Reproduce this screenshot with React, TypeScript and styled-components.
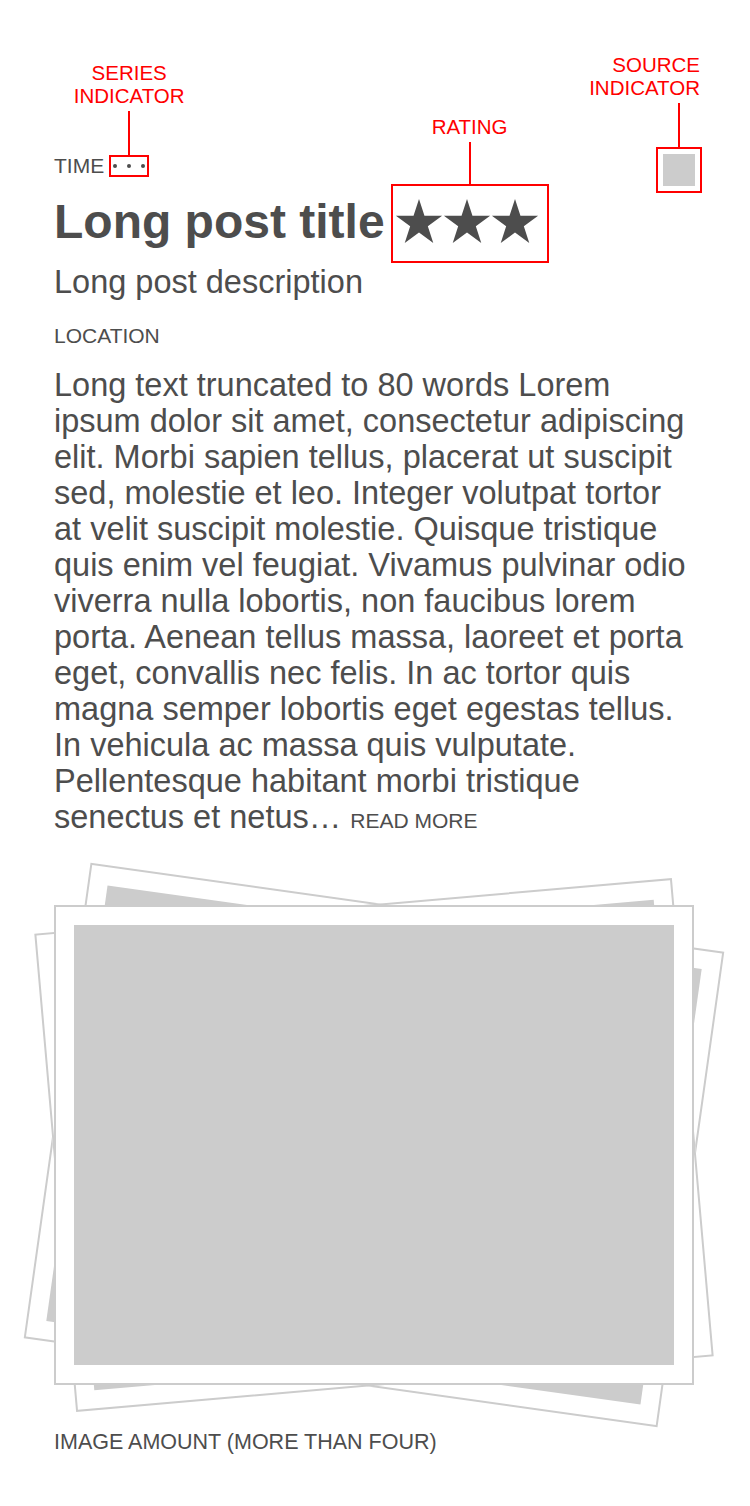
import React from 'react';
import styled, { createGlobalStyle } from 'styled-components';

const ink = '#4d4d4d';
const red = '#ff0000';
const grey = '#cccccc';

const GlobalStyle = createGlobalStyle`
  html, body {
    margin: 0;
    padding: 0;
    background: #ffffff;
  }
  body {
    font-family: "Liberation Sans", Arial, Helvetica, sans-serif;
    color: ${ink};
  }
`;

const Page = styled.div`
  position: relative;
  width: 750px;
  min-height: 1506px;
  box-sizing: border-box;
  padding: 155px 56px 0 54px;
`;

// red annotation: label with a leader line down to the marked part
const Callout = styled.div`
  position: absolute;
  left: 0;
  right: 0;
  bottom: 100%;
  display: flex;
  flex-direction: column;
  align-items: center;
  gap: 4px;
  pointer-events: none;
`;

const CalloutText = styled.div<{ $align?: 'center' | 'end' }>`
  align-self: ${p => (p.$align === 'end' ? 'flex-end' : 'center')};
  text-align: ${p => (p.$align === 'end' ? 'right' : 'center')};
  white-space: nowrap;
  color: ${red};
  font-size: 20.5px;
  line-height: 23px;
`;

const Leader = styled.div<{ $len: number }>`
  width: 2px;
  height: ${p => p.$len}px;
  background: ${red};
`;

const MetaRow = styled.div`
  display: flex;
  align-items: center;
  gap: 5px;
  height: 22px;
`;

const SmallCaps = styled.div<{ $top?: number; $size?: number }>`
  margin-top: ${p => p.$top ?? 0}px;
  font-size: ${p => p.$size ?? 21}px;
  line-height: 24px;
  text-transform: uppercase;
  white-space: nowrap;
`;

const SeriesBox = styled.div`
  position: relative;
  box-sizing: border-box;
  width: 40px;
  height: 22px;
  border: 2px solid ${red};
  display: flex;
  align-items: center;
  justify-content: center;
  gap: 10px;
`;

const Dot = styled.span`
  width: 4px;
  height: 4px;
  border-radius: 50%;
  background: #4d4d4d;
`;

const SourceBadge = styled.div`
  position: absolute;
  top: 147px;
  right: 48px;
  box-sizing: border-box;
  width: 46px;
  height: 46px;
  border: 2px solid ${red};
  display: flex;
  align-items: center;
  justify-content: center;
`;

const SourceIcon = styled.div`
  width: 32px;
  height: 32px;
  background: ${grey};
`;

const TitleRow = styled.div`
  display: flex;
  align-items: center;
  gap: 6px;
  margin-top: 7px;
`;

const Title = styled.h1`
  margin: 0;
  padding-bottom: 4px;
  font-size: 48px;
  font-weight: 700;
  line-height: 48px;
  white-space: nowrap;
`;

const RatingBox = styled.div`
  position: relative;
  box-sizing: border-box;
  width: 158px;
  height: 79px;
  border: 2px solid ${red};
  display: flex;
  align-items: center;
  justify-content: center;
  padding: 0 5px 6px 0;
  svg {
    display: block;
  }
`;

const Description = styled.p`
  margin: 1px 0 0;
  font-size: 32.5px;
  line-height: 36px;
`;

const Body = styled.p`
  margin: 19px 0 0;
  font-size: 32.5px;
  line-height: 36px;
  white-space: nowrap;
`;

const ReadMore = styled.span`
  font-size: 21px;
  text-transform: uppercase;
`;

const Stack = styled.div`
  position: relative;
  width: 640px;
  height: 480px;
  margin-top: 66px;
`;

const Frame = styled.div<{ $tilt?: number }>`
  position: ${p => (p.$tilt ? 'absolute' : 'relative')};
  inset: 0;
  z-index: ${p => (p.$tilt ? 0 : 1)};
  box-sizing: border-box;
  width: 640px;
  height: 480px;
  padding: 18px;
  background: #ffffff;
  border: 2px solid ${grey};
  transform: rotate(${p => p.$tilt ?? 0}deg);
`;

const Photo = styled.div`
  width: 100%;
  height: 100%;
  background: ${grey};
`;

const starPoints = (cx: number, cy: number, outer: number) =>
  Array.from({ length: 10 }, (_, i) => {
    const r = i % 2 === 0 ? outer : outer * 0.382;
    const a = (Math.PI / 180) * (-90 + i * 36);
    return `${(cx + r * Math.cos(a)).toFixed(2)},${(cy + r * Math.sin(a)).toFixed(2)}`;
  }).join(' ');

const Star = () => (
  <svg width="48" height="48" viewBox="0 0 48 48">
    <polygon points={starPoints(24, 26.3, 24.3)} fill={ink} />
  </svg>
);

const bodyLines = [
  'Long text truncated to 80 words Lorem',
  'ipsum dolor sit amet, consectetur adipiscing',
  'elit. Morbi sapien tellus, placerat ut suscipit',
  'sed, molestie et leo. Integer volutpat tortor',
  'at velit suscipit molestie. Quisque tristique',
  'quis enim vel feugiat. Vivamus pulvinar odio',
  'viverra nulla lobortis, non faucibus lorem',
  'porta. Aenean tellus massa, laoreet et porta',
  'eget, convallis nec felis. In ac tortor quis',
  'magna semper lobortis eget egestas tellus.',
  'In vehicula ac massa quis vulputate.',
  'Pellentesque habitant morbi tristique',
];

const App = () => {
  return (
    <>
      <GlobalStyle />
      <Page>
        <SourceBadge>
          <Callout>
            <CalloutText $align="end">
              SOURCE
              <br />
              INDICATOR
            </CalloutText>
            <Leader $len={46} />
          </Callout>
          <SourceIcon />
        </SourceBadge>

        <MetaRow>
          <SmallCaps>Time</SmallCaps>
          <SeriesBox>
            <Callout>
              <CalloutText>
                SERIES
                <br />
                INDICATOR
              </CalloutText>
              <Leader $len={46} />
            </Callout>
            <Dot />
            <Dot />
            <Dot />
          </SeriesBox>
        </MetaRow>

        <TitleRow>
          <Title>Long post title</Title>
          <RatingBox>
            <Callout>
              <CalloutText>RATING</CalloutText>
              <Leader $len={44} />
            </Callout>
            <Star />
            <Star />
            <Star />
          </RatingBox>
        </TitleRow>

        <Description>Long post description</Description>
        <SmallCaps $top={24}>Location</SmallCaps>

        <Body>
          {bodyLines.map(line => (
            <React.Fragment key={line}>
              {line}
              <br />
            </React.Fragment>
          ))}
          senectus et netus… <ReadMore>Read more</ReadMore>
        </Body>

        <Stack>
          <Frame $tilt={8}>
            <Photo />
          </Frame>
          <Frame $tilt={-5}>
            <Photo />
          </Frame>
          <Frame>
            <Photo />
          </Frame>
        </Stack>

        <SmallCaps $top={45} $size={21.5}>
          Image amount (more than four)
        </SmallCaps>
      </Page>
    </>
  );
};

export default App;
